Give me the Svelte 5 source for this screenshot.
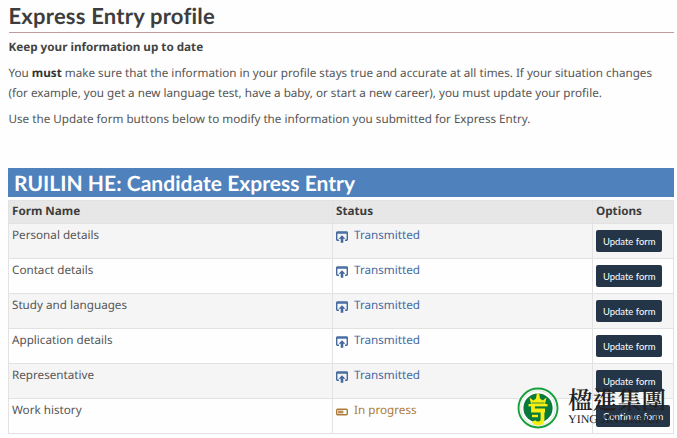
<script>
  const candidate = 'RUILIN HE';

  const forms = [
    { name: 'Personal details', status: 'Transmitted', action: 'Update form' },
    { name: 'Contact details', status: 'Transmitted', action: 'Update form' },
    { name: 'Study and languages', status: 'Transmitted', action: 'Update form' },
    { name: 'Application details', status: 'Transmitted', action: 'Update form' },
    { name: 'Representative', status: 'Transmitted', action: 'Update form' },
    { name: 'Work history', status: 'In progress', action: 'Continue form' }
  ];
</script>

<main>
  <h1>Express Entry profile</h1>
  <h2>Keep your information up to date</h2>
  <p>
    You <strong>must</strong> make sure that the information in your profile stays true and accurate at all times. If your situation changes<br />
    (for example, you get a new language test, have a baby, or start a new career), you must update your profile.
  </p>
  <p>Use the Update form buttons below to modify the information you submitted for Express Entry.</p>

  <table>
    <caption>{candidate}: Candidate Express Entry</caption>
    <colgroup>
      <col class="colName" />
      <col class="colStatus" />
      <col />
    </colgroup>
    <thead>
      <tr>
        <th>Form Name</th>
        <th>Status</th>
        <th>Options</th>
      </tr>
    </thead>
    <tbody>
      {#each forms as form}
        <tr>
          <td>{form.name}</td>
          <td>
            {#if form.status === 'Transmitted'}
              <span class="status sent">
                <svg width="12" height="12" viewBox="0 0 12 12">
                  <path d="M3 9.2H1.4Q.7 9.2.7 8.5V1.8Q.7 1 1.4 1h9.2q.7 0 .7.7v6.8q0 .7-.7.7H9" fill="none" stroke="currentColor" stroke-width="1.4" />
                  <path d="M.6 1h10.8v2H.6z" fill="currentColor" opacity=".75" />
                  <path d="M6 4.2 9.4 7.8H7.3v4H4.7v-4H2.6z" fill="currentColor" />
                </svg>
                {form.status}
              </span>
            {:else}
              <span class="status progress">
                <svg width="12" height="12" viewBox="0 0 12 12">
                  <rect x=".7" y="3.2" width="10.6" height="5.6" rx="1" fill="none" stroke="currentColor" stroke-width="1.4" />
                  <path d="M2 4.6h5.4v2.8H2z" fill="currentColor" opacity=".85" />
                </svg>
                {form.status}
              </span>
            {/if}
          </td>
          <td><button>{form.action}</button></td>
        </tr>
      {/each}
    </tbody>
  </table>

  <div class="watermark">
    <svg width="42" height="42" viewBox="0 0 42 42">
      <circle cx="21" cy="21" r="19.5" fill="#fff" stroke="#17a03a" stroke-width="1.9" />
      <circle cx="21" cy="21" r="17.2" fill="none" stroke="#dce5dd" stroke-width="1" />
      <circle cx="21" cy="21" r="14.6" fill="#087a3c" />
      <path d="M12.5 10.5l3.8 3 2.7-2 .8-5h2.4l.8 5 2.7 2 3.8-3-1.5 6.5H14z" fill="#f6ee14" />
      <path d="M11.5 17h19v2.4h-19z" fill="#f6ee14" />
      <path d="M16 19v4.5h12M25.5 23v9.5q0 4-4 4-4 0-5-2.5" fill="none" stroke="#f6ee14" stroke-width="3.8" />
      <path d="M15 29h6" stroke="#f6ee14" stroke-width="2.4" />
      <path d="M14.5 16h13" stroke="#087a3c" stroke-width=".8" />
    </svg>
    <div class="brand">
      <span class="brandName">楹進集團</span>
      <span class="brandLatin">YING JIN GROUP</span>
    </div>
  </div>
</main>

<style>
  :global(body) {
    background: #fefefe;
    overflow: hidden;
  }

  main {
    position: relative;
    box-sizing: border-box;
    height: 438px;
    padding: 2px 3px 0 8.5px;
    font-family: "Noto Sans", sans-serif;
    font-size: 11.68px;
    line-height: 19.5px;
    color: #555;
    text-rendering: geometricPrecision;
  }

  h1 {
    margin: 0;
    height: 30px;
    border-bottom: 1px solid #c39a9e;
    font: bold 22px/28px Lato, sans-serif;
    font-variant-ligatures: none;
    letter-spacing: 0.22px;
    color: #3d3d3d;
  }

  h2 {
    margin: 5px 0 6px;
    font-size: 11.68px;
    line-height: 20px;
    color: #444;
  }

  p {
    margin: 0 0 6.5px;
    white-space: nowrap;
  }

  strong {
    color: #333;
  }

  table {
    width: 666px;
    margin-top: 39px;
    margin-left: -0.5px;
    border-collapse: collapse;
    table-layout: fixed;
  }

  caption {
    box-sizing: border-box;
    height: 29px;
    margin-bottom: 3px;
    padding-left: 6px;
    background: #4f81bd;
    color: #fff;
    font: bold 21px/31px Lato, sans-serif;
    letter-spacing: 0.03px;
    text-align: left;
  }

  .colName {
    width: 324px;
  }

  .colStatus {
    width: 260px;
  }

  th,
  td {
    box-sizing: border-box;
    padding: 1px 3px 0;
    border: 1px solid #e2e2e2;
    text-align: left;
    vertical-align: top;
  }

  th {
    height: 23px;
    background: #e7e7e7;
    color: #3c3c3c;
  }

  td {
    height: 35px;
    padding-top: 2px;
  }

  tbody tr:nth-child(odd) {
    background: #f5f5f5;
  }

  .status {
    display: flex;
    align-items: center;
    gap: 6px;
  }

  .status svg {
    margin-top: 3px;
  }

  .sent {
    color: #44699f;
  }

  .progress {
    color: #ad7a38;
  }

  button {
    display: block;
    height: 22px;
    margin-top: 4px;
    padding: 0 7px;
    border: 0;
    border-radius: 2px;
    background: #243548;
    color: #fff;
    font: 9.45px/23px Lato, sans-serif;
    white-space: nowrap;
  }

  .watermark {
    position: absolute;
    left: 517px;
    top: 387px;
    display: flex;
    gap: 9px;
  }

  .brand {
    display: flex;
    flex-direction: column;
    color: #241f20;
    white-space: nowrap;
  }

  .brandName {
    font: 600 24.5px/26px "Noto Serif CJK TC", "Noto Sans CJK TC", serif;
  }

  .brandLatin {
    font: 12px/13px "Liberation Serif", serif;
  }
</style>
